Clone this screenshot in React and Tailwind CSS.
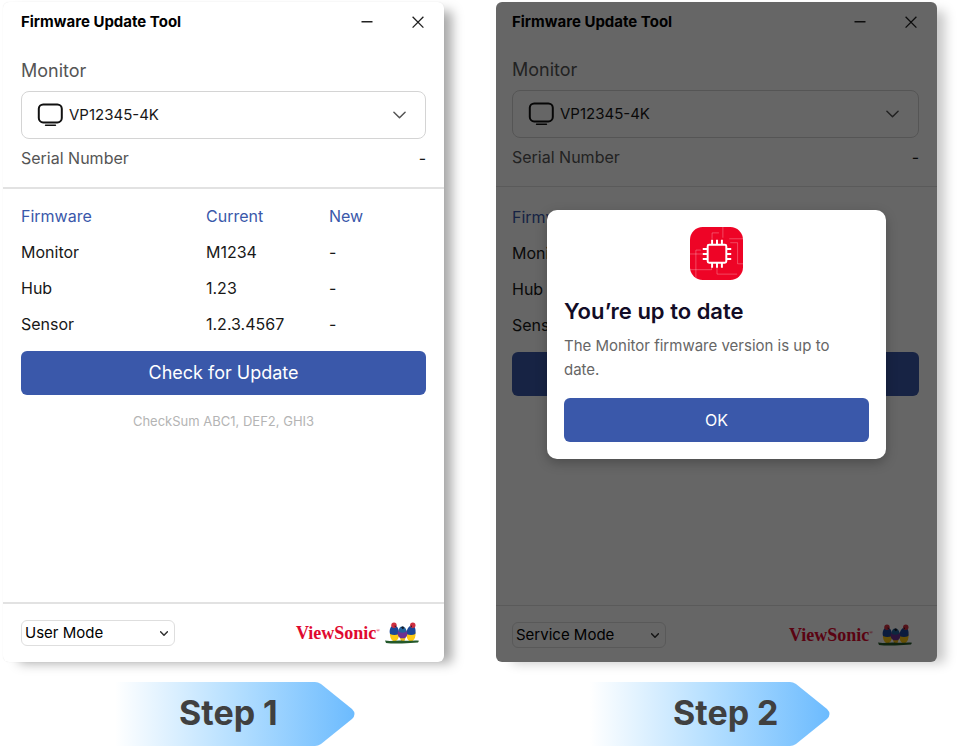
import { useState } from 'react';

const FIRMWARE = [
    { name: 'Monitor', current: 'M1234', next: '-' },
    { name: 'Hub', current: '1.23', next: '-' },
    { name: 'Sensor', current: '1.2.3.4567', next: '-' },
];

const MinimizeIcon = () => (
    <svg className="w-4 h-4" viewBox="0 0 16 16" fill="none" stroke="currentColor" strokeWidth="1.4">
        <path d="M2.5 7.8h11" />
    </svg>
);

const CloseIcon = () => (
    <svg className="w-4 h-4" viewBox="0 0 16 16" fill="none" stroke="currentColor" strokeWidth="1.3">
        <path d="M2.6 2.8l10.8 10.8M13.4 2.8L2.6 13.6" />
    </svg>
);

const MonitorIcon = ({ className }) => (
    <svg className={className} width="26" height="24" viewBox="0 0 26 24" fill="none" stroke="#111" strokeLinecap="round">
        <rect x="1.8" y="1.4" width="23" height="18" rx="4.4" strokeWidth="2" />
        <path d="M8.5 22.2h10" strokeWidth="1.4" />
    </svg>
);

const Chevron = ({ className }) => (
    <svg className={className} viewBox="0 0 14 8" fill="none" stroke="currentColor" strokeLinecap="round" strokeLinejoin="round">
        <path d="M1 1l6 6 6-6" />
    </svg>
);

const ChipIcon = () => (
    <svg width="53" height="53" viewBox="0 0 54 54" fill="none">
        <rect width="54" height="54" rx="13" fill="#ee0426" />
        {/* Circuit traces */}
        <g stroke="#fff" strokeOpacity="0.35" strokeWidth="0.8">
            <path d="M33.5 0v11M22.5 12V6h7M54 12H40M41 16h7.5v21.5H54M0 27.5h13M6 53V23.5h5M0 43.5h22V40M27.5 41v7H48" />
        </g>
        <rect x="18" y="18" width="19" height="18.5" rx="1.5" stroke="#fff" strokeWidth="2" />
        <g stroke="#fff" strokeWidth="2">
            <path d="M22.5 13v5M27.5 13v5M32.5 13v5M22.5 36v5.5M27.5 36v5.5M32.5 36v5.5" />
            <path d="M13 22.5h5M13 27.5h5M13 32.5h5M37 22.5h5M37 27.5h5M37 32.5h5" />
        </g>
    </svg>
);

const Birds = () => (
    <svg width="36" height="24" viewBox="0 0 36 24">
        {/* Yellow bellies */}
        <path d="M6 11h9c.6 4-.8 8-3.200 9H9c-2.400-1.500-3.400-5-3-9z" fill="#fdc913" />
        <path d="M22.500 11h9c.4 4-.6 7.500-3 9h-3c-2.400-1.200-3.600-5-3-9z" fill="#fdc913" />
        <path d="M15.500 15.500h6.500l-1.500 4.500h-3.500z" fill="#f0b81a" />
        {/* Wings */}
        <path d="M7.500 5.200C5.600 7.500 5.200 10.500 6 13c2.600 1.400 6.200 1.300 8.800 0 .4-3-.3-6-2.300-7.800z" fill="#1c4798" />
        <path d="M25.500 5.200c-2.400 2.200-3.300 5-3 7.800 2.600 1.300 6.200 1.400 8.800 0 .6-3 .3-5.800-1-7.800z" fill="#1c4798" />
        <path d="M14.200 9.500c-1.200 3.500-.3 6.500 2.600 7.800h3.600c2.800-1.300 3.600-4.500 2.200-7.800z" fill="#6d3192" />
        <path d="M14.500 10.500c.2-3.400 1.600-5 3.800-5s3.900 1.600 4.200 5c-2.400 1.600-5.600 1.600-8 0z" fill="#23629c" />
        {/* Heads */}
        <circle cx="10" cy="4.200" r="2.700" fill="#cf2f40" />
        <circle cx="28.800" cy="4.200" r="2.700" fill="#cf2f40" />
        <path d="M17 6.300l2-1 1.200 1.600-1.400 1.300z" fill="#15151f" />
        <path d="M10.600 4.500l1.600.6-1.300 1.200zM28 4.500l-1.600.6 1.300 1.200z" fill="#15151f" />
        {/* Perch */}
        <path d="M1 19.600c6 .8 12-.4 18 .1s10-.5 16 0l-1 1.700c-5 .6-10 .6-16 1s-12 0-16-.5z" fill="#23582a" />
    </svg>
);

const Brand = () => (
    <div className="flex items-center gap-1 text-[#e0092f]">
        <span className="flex font-['Liberation_Serif',serif] text-lg leading-6 font-bold">
            ViewSonic<sup className="text-[5px] leading-3 pt-1 top-0">®</sup>
        </span>
        <Birds />
    </div>
);

const UpdateWindow = ({ id, initialMode, dimmed, children }) => {
    const [mode, setMode] = useState(initialMode);
    const gutter = dimmed ? 'pl-4 pr-[18px]' : 'px-[18px]';

    return (
        <section
            className={`relative flex flex-col overflow-clip rounded-md bg-white ${
                dimmed
                    ? 'shadow-[12px_5px_12px_-4px_rgba(0,0,0,0.22)]'
                    : 'shadow-[12px_5px_12px_-4px_rgba(0,0,0,0.34),0_0_1px_rgba(0,0,0,0.12)]'
            }`}
        >
            {/* Title bar */}
            <header className={`flex items-center justify-between ${gutter} ${dimmed ? 'h-[39px]' : 'h-10'}`}>
                <h1 className="text-[15px] leading-6 font-bold text-black">Firmware Update Tool</h1>
                <div className="flex gap-[35px] text-[#222]">
                    <button type="button" aria-label="Minimize"><MinimizeIcon /></button>
                    <button type="button" aria-label="Close"><CloseIcon /></button>
                </div>
            </header>

            {/* Monitor picker */}
            <div className={`pt-[17px] pb-[17px] border-[#e2e2e2] ${gutter} ${dimmed ? 'border-b' : 'border-b-2'}`}>
                <label htmlFor={`${id}-monitor`} className="block text-lg leading-6 text-[#555]">Monitor</label>
                <div className="relative mt-2">
                    <MonitorIcon className="absolute left-4 top-3 pointer-events-none" />
                    <select
                        id={`${id}-monitor`}
                        className="w-full h-12 pl-[47px] pr-10 appearance-none rounded-lg border border-[#d4d4d4] bg-transparent text-[15px] leading-6 text-[#181818]"
                    >
                        <option>VP12345-4K</option>
                    </select>
                    <Chevron className="absolute right-5 top-5 w-[13px] h-2 stroke-[1.6] text-[#555] pointer-events-none" />
                </div>
                <div className="mt-[7px] flex justify-between text-base text-[#555]">
                    <span>Serial Number</span>
                    <span className="text-[#181818]">-</span>
                </div>
            </div>

            {/* Firmware versions */}
            <div className={`${gutter} ${dimmed ? 'pt-3' : 'pt-[9px]'}`}>
                <table className="w-full table-fixed text-left text-base text-[#181818]">
                    <thead>
                        <tr className="h-9 text-[#3a58aa]">
                            <th className="w-[185px] p-0 font-normal">Firmware</th>
                            <th className="w-[123px] p-0 font-normal">Current</th>
                            <th className="p-0 font-normal">New</th>
                        </tr>
                    </thead>
                    <tbody>
                        {FIRMWARE.map((row) => (
                            <tr key={row.name} className="h-9">
                                <td className="p-0">{row.name}</td>
                                <td className="p-0">{row.current}</td>
                                <td className="p-0">{row.next}</td>
                            </tr>
                        ))}
                    </tbody>
                </table>
                <button type="button" className="mt-[9px] w-full h-11 rounded-md bg-[#3a58aa] text-lg text-white">
                    Check for Update
                </button>
                <p className="mt-4 text-center text-[13px] leading-5 text-[#b4b4b4]">CheckSum ABC1, DEF2, GHI3</p>
            </div>

            {/* Footer */}
            <footer
                className={`mt-auto flex items-center justify-between border-[#e2e2e2] pr-6 pt-4 ${
                    dimmed ? 'border-t pl-4 pb-[14px]' : 'border-t-2 pl-[18px] pb-4'
                }`}
            >
                <div className="relative">
                    <select
                        aria-label="Mode"
                        value={mode}
                        onChange={(e) => setMode(e.target.value)}
                        className="w-[154px] h-[26px] pl-[3px] pr-6 appearance-none rounded-md border border-[#dedede] bg-transparent text-[15px] leading-6 text-black"
                    >
                        <option>User Mode</option>
                        <option>Service Mode</option>
                    </select>
                    <Chevron className="absolute right-[7px] top-[11px] w-2 h-[5px] stroke-[2.6] text-[#333] pointer-events-none" />
                </div>
                <Brand />
            </footer>

            {children}
        </section>
    );
};

const UpToDateDialog = () => (
    <div className="absolute inset-0 flex items-center justify-center bg-black/60 px-4 pt-[5px]">
        <div
            role="dialog"
            aria-labelledby="dialog-title"
            className="flex w-full max-w-[339px] flex-col rounded-[10px] bg-white p-[17px] shadow-[0_4px_12px_rgba(0,0,0,0.25)]"
        >
            <div className="flex justify-center"><ChipIcon /></div>
            <h2 id="dialog-title" className="mt-4 text-[22px] leading-[30px] font-semibold text-[#120c26]">You’re up to date</h2>
            <p className="mt-2 text-[15px] leading-6 text-[#666]">The Monitor firmware version is up to date.</p>
            <button type="button" className="mt-4 h-11 rounded-md bg-[#3a58aa] text-base text-white">OK</button>
        </div>
    </div>
);

const StepArrow = ({ id, label, className }) => (
    <div className={`relative flex h-16 w-[240px] items-center pb-[2px] ${className}`}>
        <svg className="absolute inset-0 w-full h-full" viewBox="0 0 240 64" preserveAspectRatio="none">
            <defs>
                <linearGradient id={id}>
                    <stop offset="0" stopColor="#fff" />
                    <stop offset="0.5" stopColor="#b5dfff" />
                    <stop offset="1" stopColor="#6cbbfe" />
                </linearGradient>
            </defs>
            <path d="M0 0H200q3 0 6 2l31 25q5 5 0 10l-31 25q-3 2-6 2H0z" fill={`url(#${id})`} />
        </svg>
        <span className="relative text-[34px] leading-10 font-bold text-[#404040]">{label}</span>
    </div>
);

const App = () => (
    <main className="grid min-h-screen grid-cols-2 grid-rows-[1fr_auto] gap-x-[52px] gap-y-5 bg-white pt-[2px] pr-[23px] pb-[2px] pl-[3px] font-[Inter,sans-serif]">
        <UpdateWindow id="step-one" initialMode="User Mode" />
        <UpdateWindow id="step-two" initialMode="Service Mode" dimmed>
            <UpToDateDialog />
        </UpdateWindow>
        <StepArrow id="arrow-one" label="Step 1" className="ml-28 pl-16" />
        <StepArrow id="arrow-two" label="Step 2" className="ml-[94px] pl-[83px]" />
    </main>
);

export default App;
